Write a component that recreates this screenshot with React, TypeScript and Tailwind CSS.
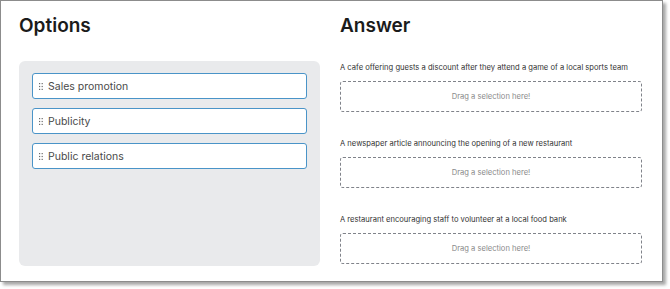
const options = ['Sales promotion', 'Publicity', 'Public relations']

const prompts = [
  'A cafe offering guests a discount after they attend a game of a local sports team',
  'A newspaper article announcing the opening of a new restaurant',
  'A restaurant encouraging staff to volunteer at a local food bank',
]

function DragHandle() {
  return (
    <svg width="4" height="7" viewBox="0 0 4 7" className="shrink-0" fill="#6b6b6b">
      <rect x="0" y="0" width="1.2" height="1.2" />
      <rect x="2.6" y="0" width="1.2" height="1.2" />
      <rect x="0" y="2.9" width="1.2" height="1.2" />
      <rect x="2.6" y="2.9" width="1.2" height="1.2" />
      <rect x="0" y="5.8" width="1.2" height="1.2" />
      <rect x="2.6" y="5.8" width="1.2" height="1.2" />
    </svg>
  )
}

export default function App() {
  return (
    <div className="w-[670px] h-[289px] bg-white" style={{ fontFamily: 'Inter, "Open Sans", sans-serif' }}>
      <div className="w-[663px] h-[282px] border border-[#8c8c8c] bg-white shadow-[3px_3px_3px_rgba(0,0,0,0.35)] flex gap-[20px] pl-[18px] pt-[13px]">
        {/* Options column */}
        <div className="w-[301px] flex flex-col">
          <h2 className="h-[47px] text-[19px] leading-[24px] font-semibold text-[#1b1b1b]">Options</h2>
          <div className="h-[205px] rounded-[6px] bg-[#e9eaec] px-[13px] pt-[12px] flex flex-col gap-[9px]">
            {options.map((o) => (
              <div
                key={o}
                className="h-[26px] rounded-[3px] border-[1.5px] border-[#4a94c8] bg-white flex items-center gap-[5px] pl-[6px] pt-[1px] text-[10.5px] text-[#4a4a4a]"
              >
                <DragHandle />
                <span>{o}</span>
              </div>
            ))}
          </div>
        </div>

        {/* Answer column */}
        <div className="w-[302px] flex flex-col">
          <h2 className="h-[47px] text-[19px] leading-[24px] font-semibold text-[#1b1b1b]">Answer</h2>
          <div className="mt-[1px] flex flex-col gap-[26px]">
            {prompts.map((p) => (
              <div key={p} className="flex flex-col gap-[7px]">
                <p className="text-[7.6px] leading-[12px] text-[#333] whitespace-nowrap">{p}</p>
                <div className="h-[31px] rounded-[3px] border-[1.5px] border-dashed border-[#80838a] flex items-center justify-center pt-[1px] text-[7.6px] text-[#8a8a8a]">
                  Drag a selection here!
                </div>
              </div>
            ))}
          </div>
        </div>
      </div>
    </div>
  )
}
